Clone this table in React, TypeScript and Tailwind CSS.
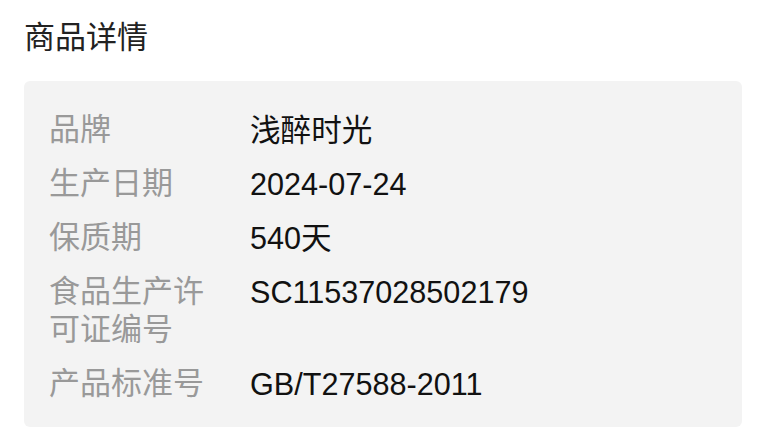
import React from "react";

const rows: { label: string; value: string }[] = [
  { label: "品牌", value: "浅醉时光" },
  { label: "生产日期", value: "2024-07-24" },
  { label: "保质期", value: "540天" },
  { label: "食品生产许可证编号", value: "SC11537028502179" },
  { label: "产品标准号", value: "GB/T27588-2011" },
];

export default function App() {
  return (
    <div
      className="w-[766px] h-[447px] bg-white px-6 pt-[19px]"
      style={{ fontFamily: '"Liberation Sans", "Noto Sans CJK SC", sans-serif' }}
    >
      <h1 className="text-[31px] leading-[38px] text-[#222222] font-normal">商品详情</h1>
      <div className="mt-[24px] rounded-md bg-[#f3f3f3] pl-[25px] pr-6 pt-[30px] pb-[24px] flex flex-col gap-4">
        {rows.map((r) => (
          <div key={r.label} className="flex items-start leading-[38px]">
            <div className="w-[160px] shrink-0 text-[31px] text-[#999999]">{r.label}</div>
            <div className="ml-[41px] text-[30.6px] text-[#111111]">{r.value}</div>
          </div>
        ))}
      </div>
    </div>
  );
}
